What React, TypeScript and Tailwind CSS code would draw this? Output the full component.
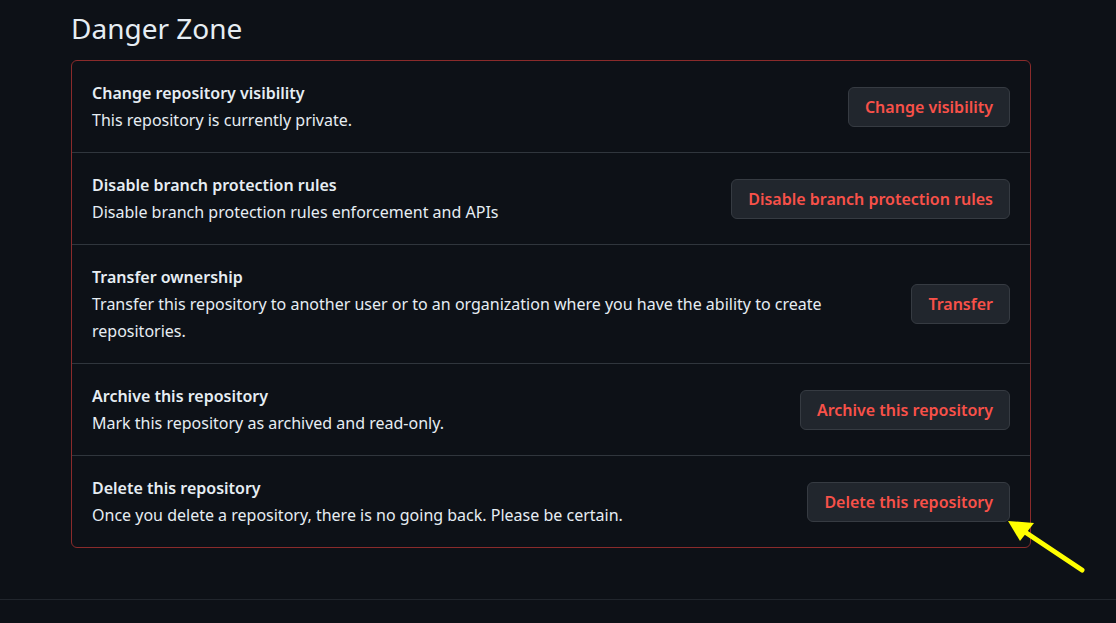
import React from 'react'

type Row = {
  title: string
  desc: string
  action: string
}

const rows: Row[] = [
  {
    title: 'Change repository visibility',
    desc: 'This repository is currently private.',
    action: 'Change visibility',
  },
  {
    title: 'Disable branch protection rules',
    desc: 'Disable branch protection rules enforcement and APIs',
    action: 'Disable branch protection rules',
  },
  {
    title: 'Transfer ownership',
    desc: 'Transfer this repository to another user or to an organization where you have the ability to create repositories.',
    action: 'Transfer',
  },
  {
    title: 'Archive this repository',
    desc: 'Mark this repository as archived and read-only.',
    action: 'Archive this repository',
  },
  {
    title: 'Delete this repository',
    desc: 'Once you delete a repository, there is no going back. Please be certain.',
    action: 'Delete this repository',
  },
]

export default function App() {
  return (
    <div
      className="relative w-[1116px] h-[623px] overflow-hidden bg-[#0d1117] text-[#e6edf3]"
      style={{ fontFamily: '"Noto Sans", "Open Sans", sans-serif' }}
    >
      <div className="w-[960px] ml-[71px]">
        {/* Heading */}
        <h2 className="pt-[8px] h-[60px] text-[28px] leading-[40px] font-normal">Danger Zone</h2>

        {/* Danger box */}
        <div className="border border-[#8a2b2b] rounded-[6px]">
          {rows.map((row, i) => (
            <div
              key={row.title}
              className={`flex items-center justify-between gap-4 px-[20px] py-[18.5px] ${
                i > 0 ? 'border-t border-[#30363d]' : ''
              }`}
            >
              <div className="max-w-[780px] text-[16px] leading-[27px]">
                <div className="font-semibold">{row.title}</div>
                <div>{row.desc}</div>
              </div>
              <button className="shrink-0 h-[40px] px-[16px] rounded-[6px] bg-[#21262d] border border-[#363b42] text-[#f85149] text-[16px] font-semibold">
                {row.action}
              </button>
            </div>
          ))}
        </div>
      </div>

      {/* Footer rule */}
      <div className="absolute left-0 right-0 top-[599px] border-t border-[#21262d]" />

      {/* Annotation arrow */}
      <svg className="absolute left-[1000px] top-[511px]" width="100" height="70" viewBox="0 0 100 70">
        <line x1="82" y1="59" x2="22" y2="19" stroke="#ffff00" strokeWidth="5" strokeLinecap="round" />
        <polygon points="8,10 34,12 20,30" fill="#ffff00" />
      </svg>
    </div>
  )
}
